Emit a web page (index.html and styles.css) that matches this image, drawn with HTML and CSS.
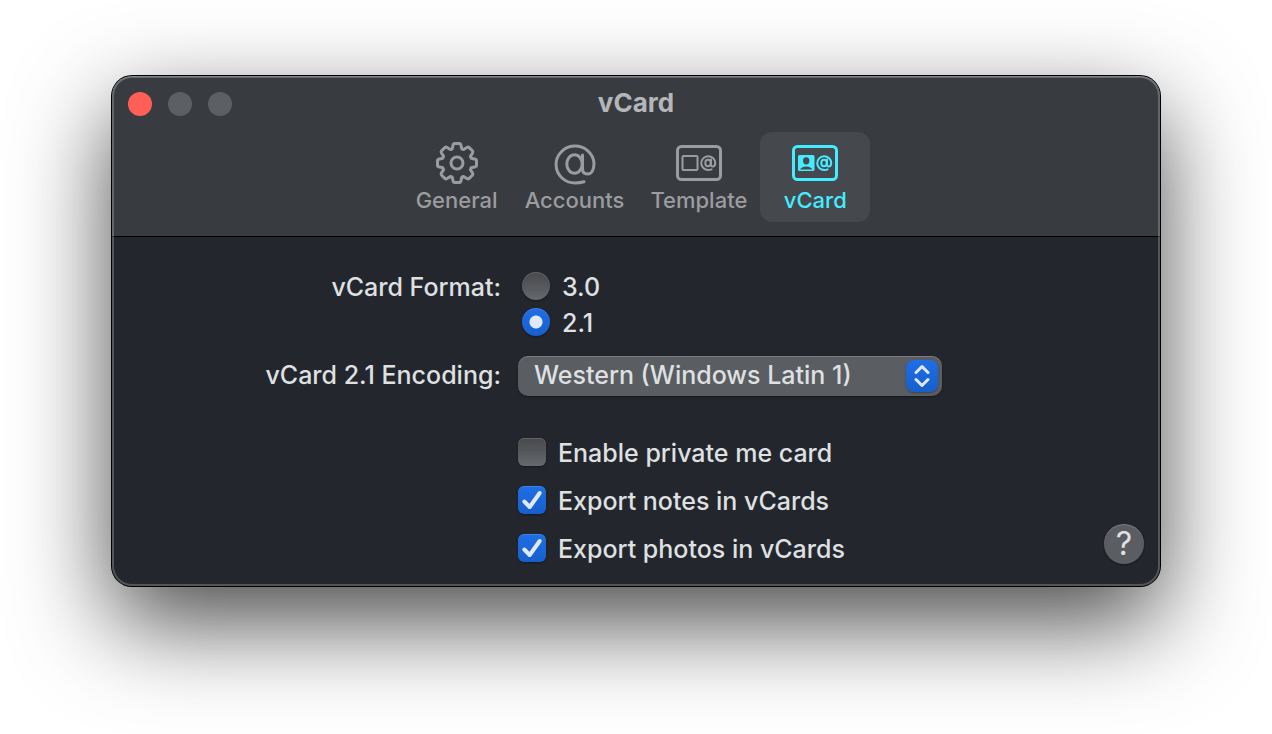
FILE: index.html
```html
<!DOCTYPE html>
<html lang="en">
<head>
<meta charset="utf-8">
<title>vCard</title>
<link rel="stylesheet" href="styles.css">
</head>
<body>
<main class="window">
  <header class="toolbar">
    <div class="titlebar">
      <div class="lights">
        <button class="light light-close" type="button" aria-label="Close"></button>
        <button class="light" type="button" aria-label="Minimize" disabled></button>
        <button class="light" type="button" aria-label="Zoom" disabled></button>
      </div>
      <h1 class="title">vCard</h1>
    </div>
    <nav class="tabs">
      <button class="tab" type="button">
        <svg class="icon" width="44" height="44" viewBox="-22 -22 44 44" aria-hidden="true">
          <path stroke-width="3" d="M-4.8-14.2L-3.8-18.4Q-3.5-19.5-2.4-19.5H2.4Q3.5-19.5 3.8-18.4L4.8-14.2L6.6-13.4L10.3-15.7Q11.3-16.2 12.2-15.4L15.4-12.2Q16.2-11.3 15.7-10.3L13.4-6.6L14.2-4.8L18.4-3.8Q19.5-3.5 19.5-2.4V2.4Q19.5 3.5 18.4 3.8L14.2 4.8L13.4 6.6L15.7 10.3Q16.2 11.3 15.4 12.2L12.2 15.4Q11.3 16.2 10.3 15.7L6.6 13.4L4.8 14.2L3.8 18.4Q3.5 19.5 2.4 19.5H-2.4Q-3.5 19.5-3.8 18.4L-4.8 14.2L-6.6 13.4L-10.3 15.7Q-11.3 16.2-12.2 15.4L-15.4 12.2Q-16.2 11.3-15.7 10.3L-13.4 6.6L-14.2 4.8L-18.4 3.8Q-19.5 3.5-19.5 2.4V-2.4Q-19.5-3.5-18.4-3.8L-14.2-4.8L-13.4-6.6L-15.7-10.3Q-16.2-11.3-15.4-12.2L-12.2-15.4Q-11.3-16.2-10.3-15.7L-6.6-13.4Z"/>
          <circle r="6" stroke-width="3"/>
        </svg>
        <span>General</span>
      </button>
      <button class="tab" type="button">
        <svg class="icon" width="44" height="44" viewBox="-22 -23 44 44" aria-hidden="true">
          <g stroke-width="3"><ellipse cx="-.5" rx="7.7" ry="9.3"/>
          <path d="M7.5-9V4.5Q7.5 10 12.5 10C17 10 19 5 19-1A19 18.5 0 1 0 0 19Q5 19 9 17.8"/></g>
        </svg>
        <span>Accounts</span>
      </button>
      <button class="tab" type="button">
        <svg class="icon" width="46" height="44" viewBox="0 -4 46 44" aria-hidden="true">
          <rect x="1.5" y="1.5" width="43" height="33" rx="4" stroke-width="3"/>
          <rect x="6.5" y="11" width="15" height="14" rx="1" stroke-width="2"/>
          <g stroke-width="2" transform="translate(32.2 18)"><ellipse cx="-.2" rx="2.7" ry="3.2"/>
          <path d="M2.8-3.4V1.2Q2.8 3.4 4.6 3.4C6.2 3.4 7 1.5 7-.3A7 6.9 0 1 0 0 7Q2 7 3.4 6.4"/></g>
        </svg>
        <span>Template</span>
      </button>
      <button class="tab tab-current" type="button" aria-current="page">
        <svg class="icon" width="46" height="44" viewBox="0 -4 46 44" aria-hidden="true">
          <rect x="1.5" y="1.5" width="43" height="33" rx="4" stroke-width="3"/>
          <path class="solid" fill-rule="evenodd" d="M7.5 10H21Q22.5 10 22.5 11.5V24.5Q22.5 26 21 26H7.5Q6 26 6 24.5V11.5Q6 10 7.5 10ZM14.2 12.2A3.2 3.6 0 0 0 14.2 19.4A3.2 3.6 0 0 0 14.2 12.2ZM8 24.6H20.5Q18.5 21.4 14.2 21.4T8 24.6Z"/>
          <g stroke-width="2" transform="translate(32.2 18)"><ellipse cx="-.2" rx="2.7" ry="3.2"/>
          <path d="M2.8-3.4V1.2Q2.8 3.4 4.6 3.4C6.2 3.4 7 1.5 7-.3A7 6.9 0 1 0 0 7Q2 7 3.4 6.4"/></g>
        </svg>
        <span>vCard</span>
      </button>
    </nav>
  </header>
  <form class="panel">
    <div class="fields">
      <span class="label" id="format-label">vCard Format:</span>
      <div class="radios" role="radiogroup" aria-labelledby="format-label">
        <label class="choice radio-choice"><input class="radio" type="radio" name="format" value="3.0"><span>3.0</span></label>
        <label class="choice radio-choice"><input class="radio" type="radio" name="format" value="2.1" checked><span>2.1</span></label>
      </div>
      <label class="label label-popup" for="encoding">vCard 2.1 Encoding:</label>
      <div class="popup">
        <select class="select" id="encoding">
          <option>Western (Windows Latin 1)</option>
        </select>
        <span class="stepper">
          <svg class="icon" width="16" height="24" viewBox="0 0 16 24" stroke-width="3" aria-hidden="true"><path d="M2 8.5L8 2.5L14 8.5M2 15.5L8 21.5L14 15.5"/></svg>
        </span>
      </div>
      <div class="checks">
        <label class="choice check-choice"><input class="check" type="checkbox"><span>Enable private me card</span></label>
        <label class="choice check-choice"><input class="check" type="checkbox" checked><span>Export notes in vCards</span></label>
        <label class="choice check-choice"><input class="check" type="checkbox" checked><span>Export photos in vCards</span></label>
      </div>
    </div>
    <button class="help" type="button" aria-label="Help">?</button>
  </form>
</main>
</body>
</html>
```
FILE: styles.css
```css
* {
  box-sizing: border-box;
}

body {
  min-height: 100vh;
  margin: 0;
  padding: 76px 112px;
  background: #fff;
  color: #dfe0e1;
  font-family: Inter, "Liberation Sans", sans-serif;
  font-size: 25px;
  font-weight: 500;
  line-height: 32px;
}

button,
select {
  border: 0;
  padding: 0;
  font: inherit;
  color: inherit;
}

.window {
  position: relative;
  border-radius: 20px;
  background: #23262d;
  box-shadow: 0 0 0 1px #000, 0 36px 96px rgba(0, 0, 0, 0.72);
}

/* light rim drawn over the toolbar and the panel */
.window::after {
  content: "";
  position: absolute;
  inset: 0;
  border-radius: 20px;
  box-shadow: inset 0 0 0 2px rgba(255, 255, 255, 0.22), inset 0 1px 0 rgba(255, 255, 255, 0.2);
  pointer-events: none;
}

.toolbar {
  padding-bottom: 14px;
  border-bottom: 1px solid #000;
  border-radius: 20px 20px 0 0;
  background: #383b40;
}

.titlebar {
  display: grid;
  grid-template-columns: 1fr auto 1fr;
  align-items: center;
  height: 56px;
  padding: 0 16px;
}

.lights {
  display: flex;
  gap: 16px;
}

.light {
  width: 24px;
  height: 24px;
  border-radius: 50%;
  background: #5c5f64;
}

.light-close {
  background: #ff5f57;
}

.title {
  margin: 0;
  padding-bottom: 2px;
  font-size: 26px;
  font-weight: 700;
  color: #b5b6b8;
}

.tabs {
  display: flex;
  justify-content: center;
}

.tab {
  display: flex;
  flex-direction: column;
  align-items: center;
  justify-content: flex-start;
  min-width: 110px;
  height: 90px;
  padding: 8px 13px;
  border-radius: 12px;
  background: transparent;
  color: #9b9c9f;
  font-size: 22px;
  line-height: 30px;
}

.tab-current {
  background: #45484d;
  color: #45ebff;
}

.icon {
  display: block;
  flex: none;
  fill: none;
  stroke: currentColor;
  stroke-linecap: round;
  stroke-linejoin: round;
}

.tab .icon {
  margin-top: 1px;
}

.solid {
  fill: currentColor;
  stroke: none;
}

.panel {
  display: flex;
  align-items: flex-end;
  padding: 31px 16px 14px 0;
}

.fields {
  flex: 1;
  display: grid;
  grid-template-columns: 389px 1fr;
  column-gap: 17px;
}

.label {
  line-height: 38px;
  text-align: right;
}

.label-popup {
  margin-top: 16px;
}

.choice {
  display: flex;
  align-items: center;
  width: max-content;
}

.choice span {
  padding-top: 2px;
}

.radio-choice {
  height: 36px;
  gap: 12px;
  padding-left: 4px;
}

.radio,
.check {
  appearance: none;
  width: 28px;
  height: 28px;
  margin: 0;
  background: linear-gradient(#46484c, #65686c);
  box-shadow: 0 1px 2px rgba(0, 0, 0, 0.4), inset 0 1px 0 rgba(255, 255, 255, 0.15);
}

.radio {
  border-radius: 50%;
}

.check {
  border-radius: 6px;
}

.radio:checked {
  background: radial-gradient(circle, #dfe9fa 0 6px, transparent 7px), linear-gradient(#1f6ee6, #175fcb);
}

.check:checked {
  background: url("data:image/svg+xml,%3Csvg xmlns='http://www.w3.org/2000/svg' viewBox='0 0 28 28'%3E%3Cpath d='M6.3 15.5L11.7 21L21.7 7' fill='none' stroke='%23dfe9fa' stroke-width='4' stroke-linecap='round' stroke-linejoin='round'/%3E%3C/svg%3E"), linear-gradient(#1f6ee6, #175fcb);
}

.popup {
  display: grid;
  width: 424px;
  margin-top: 16px;
}

.select {
  grid-area: 1 / 1;
  appearance: none;
  height: 40px;
  padding: 0 44px 2px 16px;
  border-radius: 10px;
  background: #5a5d61;
  box-shadow: 0 1px 2px rgba(0, 0, 0, 0.4), inset 0 1px 0 rgba(255, 255, 255, 0.2);
}

.stepper {
  grid-area: 1 / 1;
  place-self: center end;
  display: grid;
  place-items: center;
  width: 32px;
  height: 32px;
  margin-right: 4px;
  border-radius: 8px;
  background: linear-gradient(#1f6ee6, #175fcb);
  box-shadow: 0 1px 2px rgba(0, 0, 0, 0.3);
  color: #dfe9fa;
  pointer-events: none;
}

.checks {
  grid-column: 2;
  margin-top: 32px;
}

.check-choice {
  height: 48px;
  gap: 12px;
}

.help {
  width: 40px;
  height: 40px;
  margin-bottom: 8px;
  border-radius: 50%;
  background: #5a5d61;
  box-shadow: 0 1px 2px rgba(0, 0, 0, 0.4), inset 0 1px 0 rgba(255, 255, 255, 0.2);
  font-size: 32px;
  font-weight: 400;
  line-height: 40px;
}
```
